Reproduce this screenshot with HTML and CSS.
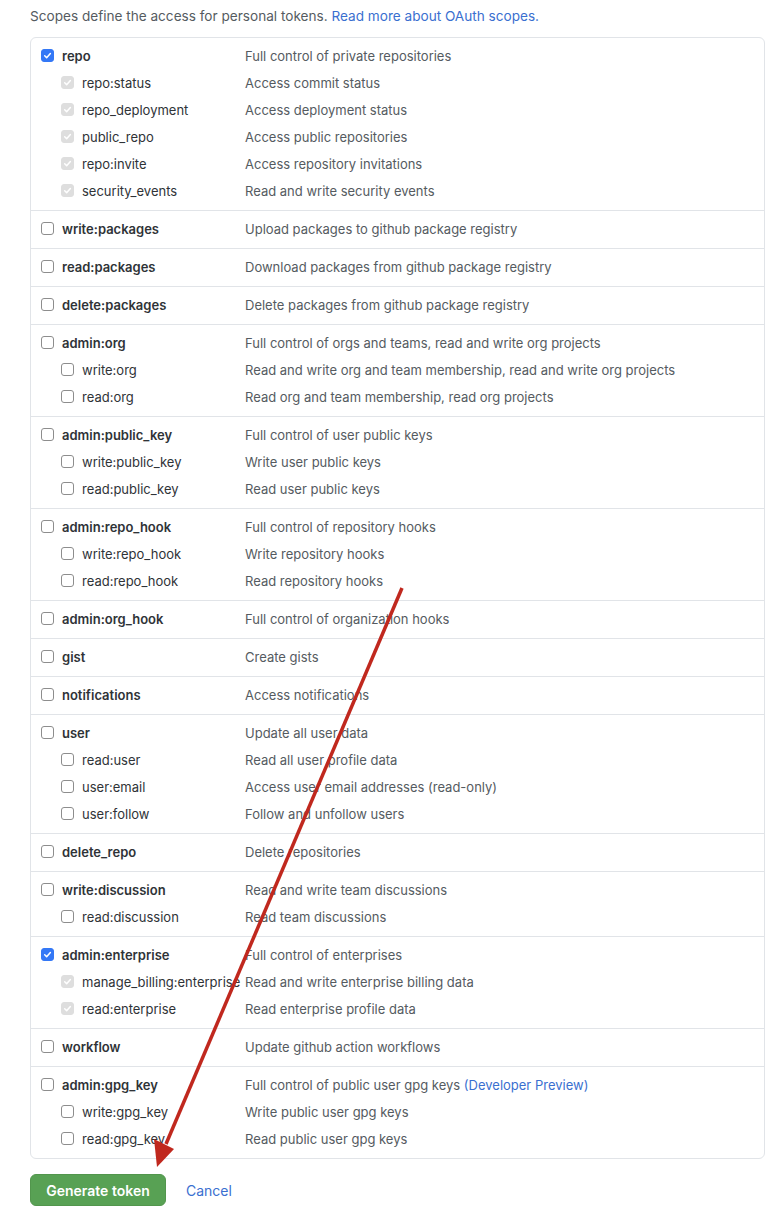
FILE: index.html
```html
<!DOCTYPE html>
<html lang="en">
<head>
<meta charset="utf-8">
<title>Scopes</title>
<link rel="stylesheet" href="styles.css">
</head>
<body>
<div class="page">
  <p class="intro">Scopes define the access for personal tokens. <a class="link" href="#">Read more about OAuth scopes.</a></p>

  <div class="scopes">
    <div class="group">
      <div class="line main"><span class="cell"><span class="cb on"><svg viewBox="0 0 13 13"><path d="M3.2 6.8l2.3 2.3 4.4-5" /></svg></span><span class="name">repo</span></span><span class="desc">Full control of private repositories</span></div>
      <div class="line sub"><span class="cell"><span class="cb dis"><svg viewBox="0 0 13 13"><path d="M3.2 6.8l2.3 2.3 4.4-5" /></svg></span><span class="name">repo:status</span></span><span class="desc">Access commit status</span></div>
      <div class="line sub"><span class="cell"><span class="cb dis"><svg viewBox="0 0 13 13"><path d="M3.2 6.8l2.3 2.3 4.4-5" /></svg></span><span class="name">repo_deployment</span></span><span class="desc">Access deployment status</span></div>
      <div class="line sub"><span class="cell"><span class="cb dis"><svg viewBox="0 0 13 13"><path d="M3.2 6.8l2.3 2.3 4.4-5" /></svg></span><span class="name">public_repo</span></span><span class="desc">Access public repositories</span></div>
      <div class="line sub"><span class="cell"><span class="cb dis"><svg viewBox="0 0 13 13"><path d="M3.2 6.8l2.3 2.3 4.4-5" /></svg></span><span class="name">repo:invite</span></span><span class="desc">Access repository invitations</span></div>
      <div class="line sub"><span class="cell"><span class="cb dis"><svg viewBox="0 0 13 13"><path d="M3.2 6.8l2.3 2.3 4.4-5" /></svg></span><span class="name">security_events</span></span><span class="desc">Read and write security events</span></div>
    </div>

    <div class="group">
      <div class="line main"><span class="cell"><span class="cb"></span><span class="name">write:packages</span></span><span class="desc">Upload packages to github package registry</span></div>
    </div>
    <div class="group">
      <div class="line main"><span class="cell"><span class="cb"></span><span class="name">read:packages</span></span><span class="desc">Download packages from github package registry</span></div>
    </div>
    <div class="group">
      <div class="line main"><span class="cell"><span class="cb"></span><span class="name">delete:packages</span></span><span class="desc">Delete packages from github package registry</span></div>
    </div>

    <div class="group">
      <div class="line main"><span class="cell"><span class="cb"></span><span class="name">admin:org</span></span><span class="desc">Full control of orgs and teams, read and write org projects</span></div>
      <div class="line sub"><span class="cell"><span class="cb"></span><span class="name">write:org</span></span><span class="desc">Read and write org and team membership, read and write org projects</span></div>
      <div class="line sub"><span class="cell"><span class="cb"></span><span class="name">read:org</span></span><span class="desc">Read org and team membership, read org projects</span></div>
    </div>

    <div class="group">
      <div class="line main"><span class="cell"><span class="cb"></span><span class="name">admin:public_key</span></span><span class="desc">Full control of user public keys</span></div>
      <div class="line sub"><span class="cell"><span class="cb"></span><span class="name">write:public_key</span></span><span class="desc">Write user public keys</span></div>
      <div class="line sub"><span class="cell"><span class="cb"></span><span class="name">read:public_key</span></span><span class="desc">Read user public keys</span></div>
    </div>

    <div class="group">
      <div class="line main"><span class="cell"><span class="cb"></span><span class="name">admin:repo_hook</span></span><span class="desc">Full control of repository hooks</span></div>
      <div class="line sub"><span class="cell"><span class="cb"></span><span class="name">write:repo_hook</span></span><span class="desc">Write repository hooks</span></div>
      <div class="line sub"><span class="cell"><span class="cb"></span><span class="name">read:repo_hook</span></span><span class="desc">Read repository hooks</span></div>
    </div>

    <div class="group">
      <div class="line main"><span class="cell"><span class="cb"></span><span class="name">admin:org_hook</span></span><span class="desc">Full control of organization hooks</span></div>
    </div>
    <div class="group">
      <div class="line main"><span class="cell"><span class="cb"></span><span class="name">gist</span></span><span class="desc">Create gists</span></div>
    </div>
    <div class="group">
      <div class="line main"><span class="cell"><span class="cb"></span><span class="name">notifications</span></span><span class="desc">Access notifications</span></div>
    </div>

    <div class="group">
      <div class="line main"><span class="cell"><span class="cb"></span><span class="name">user</span></span><span class="desc">Update all user data</span></div>
      <div class="line sub"><span class="cell"><span class="cb"></span><span class="name">read:user</span></span><span class="desc">Read all user profile data</span></div>
      <div class="line sub"><span class="cell"><span class="cb"></span><span class="name">user:email</span></span><span class="desc">Access user email addresses (read-only)</span></div>
      <div class="line sub"><span class="cell"><span class="cb"></span><span class="name">user:follow</span></span><span class="desc">Follow and unfollow users</span></div>
    </div>

    <div class="group">
      <div class="line main"><span class="cell"><span class="cb"></span><span class="name">delete_repo</span></span><span class="desc">Delete repositories</span></div>
    </div>

    <div class="group">
      <div class="line main"><span class="cell"><span class="cb"></span><span class="name">write:discussion</span></span><span class="desc">Read and write team discussions</span></div>
      <div class="line sub"><span class="cell"><span class="cb"></span><span class="name">read:discussion</span></span><span class="desc">Read team discussions</span></div>
    </div>

    <div class="group">
      <div class="line main"><span class="cell"><span class="cb on"><svg viewBox="0 0 13 13"><path d="M3.2 6.8l2.3 2.3 4.4-5" /></svg></span><span class="name">admin:enterprise</span></span><span class="desc">Full control of enterprises</span></div>
      <div class="line sub"><span class="cell"><span class="cb dis"><svg viewBox="0 0 13 13"><path d="M3.2 6.8l2.3 2.3 4.4-5" /></svg></span><span class="name">manage_billing:enterprise</span></span><span class="desc">Read and write enterprise billing data</span></div>
      <div class="line sub"><span class="cell"><span class="cb dis"><svg viewBox="0 0 13 13"><path d="M3.2 6.8l2.3 2.3 4.4-5" /></svg></span><span class="name">read:enterprise</span></span><span class="desc">Read enterprise profile data</span></div>
    </div>

    <div class="group">
      <div class="line main"><span class="cell"><span class="cb"></span><span class="name">workflow</span></span><span class="desc">Update github action workflows</span></div>
    </div>

    <div class="group">
      <div class="line main"><span class="cell"><span class="cb"></span><span class="name">admin:gpg_key</span></span><span class="desc">Full control of public user gpg keys <a class="link" href="#">(Developer Preview)</a></span></div>
      <div class="line sub"><span class="cell"><span class="cb"></span><span class="name">write:gpg_key</span></span><span class="desc">Write public user gpg keys</span></div>
      <div class="line sub"><span class="cell"><span class="cb"></span><span class="name">read:gpg_key</span></span><span class="desc">Read public user gpg keys</span></div>
    </div>
  </div>

  <div class="actions">
    <button class="btn-primary" type="button">Generate token</button>
    <a class="cancel" href="#">Cancel</a>
  </div>

  <svg class="annotation" viewBox="0 0 773 1211" width="773" height="1211">
    <line x1="402" y1="588" x2="166" y2="1144" />
    <polygon points="157,1167 154,1139 174,1149" />
  </svg>
</div>
</body>
</html>
```

FILE: styles.css
```css
* { box-sizing: border-box; }

html, body {
  margin: 0;
  padding: 0;
  background: #ffffff;
}

body {
  font-family: Inter, "Noto Sans", "Liberation Sans", sans-serif;
  font-size: 13px;
  color: #24292e;
}

.page {
  position: relative;
  width: 773px;
  min-height: 1211px;
  padding: 6px 8px 0 30px;
}

.intro {
  margin: 0 0 11px 0;
  font-size: 13.6px;
  line-height: 20px;
  color: #555b61;
}

.link {
  color: #3a6fd0;
  text-decoration: none;
}

.scopes {
  width: 735px;
  border: 1px solid #e1e4e8;
  border-radius: 6px;
}

.group {
  padding: 4px 0 6px;
  border-top: 1px solid #e1e4e8;
}

.group:first-child {
  border-top: 0;
}

.line {
  display: grid;
  grid-template-columns: 214px 1fr;
  align-items: center;
  height: 27px;
  white-space: nowrap;
}

.cell {
  display: flex;
  align-items: center;
  padding-left: 10px;
  min-width: 0;
}

.sub .cell {
  padding-left: 30px;
}

.cb {
  flex: none;
  width: 13px;
  height: 13px;
  margin-right: 8px;
  border: 1px solid #8d8d8d;
  border-radius: 3px;
  background: #fff;
  display: flex;
  align-items: center;
  justify-content: center;
}

.cb svg {
  width: 13px;
  height: 13px;
  fill: none;
  stroke: #fff;
  stroke-width: 1.8;
  stroke-linecap: round;
  stroke-linejoin: round;
}

.cb.on {
  background: #3478f6;
  border-color: #3478f6;
}

.cb.dis {
  background: #dedede;
  border-color: #dedede;
}

.name {
  color: #2f3337;
}

.main .name {
  font-weight: 600;
}

.desc {
  color: #555b61;
}

.actions {
  display: flex;
  align-items: center;
  gap: 20px;
  margin-top: 15px;
}

.btn-primary {
  font: inherit;
  font-size: 14px;
  font-weight: 600;
  color: #fff;
  background: #58a154;
  border: 1px solid #52964d;
  border-radius: 6px;
  height: 32px;
  width: 136px;
  padding: 0;
}

.cancel {
  font-size: 14px;
  color: #3a6fd0;
  text-decoration: none;
}

.annotation {
  position: absolute;
  top: 0;
  left: 0;
  pointer-events: none;
}

.annotation line {
  stroke: #c0281e;
  stroke-width: 3.5;
}

.annotation polygon {
  fill: #c0281e;
}
```
